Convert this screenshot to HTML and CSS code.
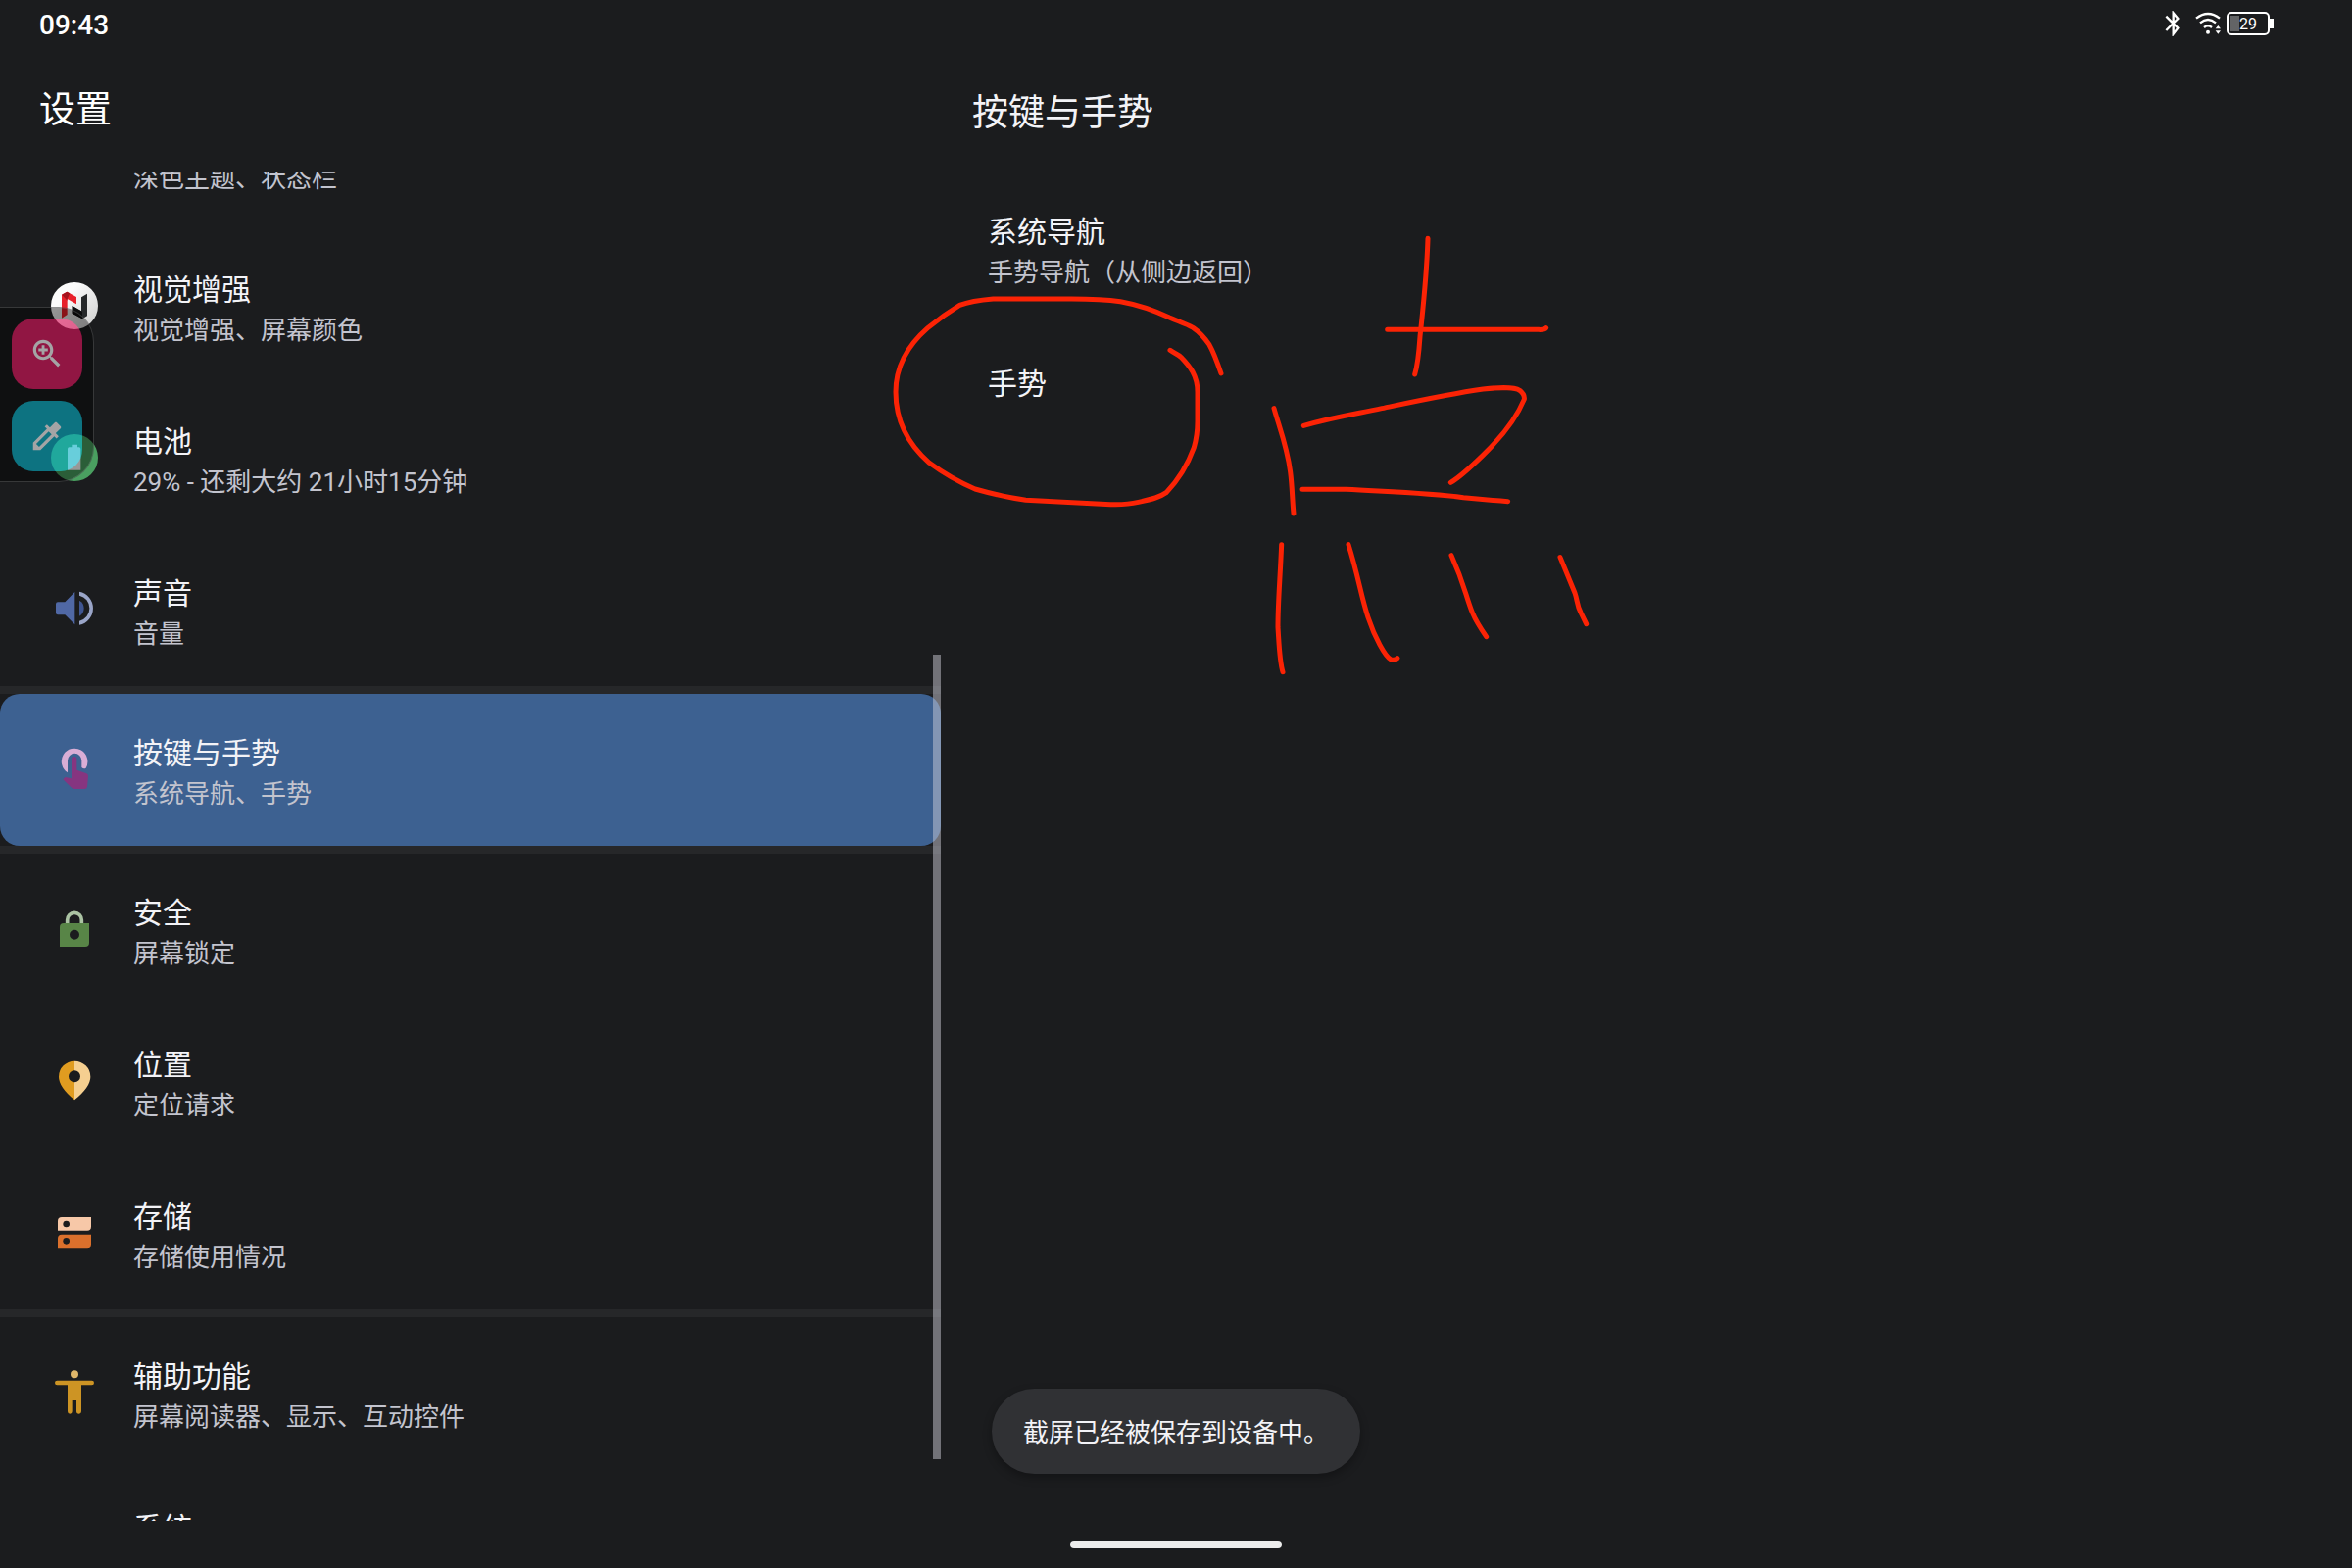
FILE: index.html
```html
<!DOCTYPE html>
<html lang="zh-CN">
  <head>
    <meta charset="UTF-8" />
    <meta name="viewport" content="width=device-width, initial-scale=1.0" />
    <title>设置</title>
    <link rel="stylesheet" href="styles.css">
  </head>
  <body>
    <header class="statusbar">
      <span class="clock">09:43</span>
      <div class="status-icons">
        <svg class="bt" viewBox="0 0 48 78">
          <path d="M4 17 L40 53 L26 71 V7 L40 24 L4 60" />
        </svg>
        <svg class="wifi" viewBox="0 0 81 70">
          <path d="M3 19 Q39 -9 75 19 M15 33 Q39 13 63 33 M27 47 Q39 37 51 47" />
          <circle cx="39" cy="61" r="6" />
          <path class="solid" d="M62 51 L70 41 L78 51 Z M62 57 L70 67 L78 57 Z" />
        </svg>
        <span class="battery"><span class="level"></span>29</span>
      </div>
    </header>

    <div class="panes">
      <section class="pane-list">
        <h1>设置</h1>
        <div class="scroll">
          <nav class="rows">
            <a class="row" href="#display">
              <span class="icon"></span>
              <span class="text"><b></b><small>深色主题、状态栏</small></span>
            </a>
            <a class="row" href="#vision">
              <svg class="icon" viewBox="0 0 144 144">
                <defs>
                  <linearGradient id="silver" x1="0" y1="0" x2="1" y2="1">
                    <stop offset="0.3" stop-color="#fbfbfb" />
                    <stop offset="1" stop-color="#cccccc" />
                  </linearGradient>
                </defs>
                <circle cx="72" cy="72" r="72" fill="url(#silver)" />
                <path fill="#e8202a" d="M33 38 L49 29 L78 45 V67 L50 51 V99 L33 110 Z" />
                <path fill="#a5121c" d="M33 38 L49 29 L58 34 L50 51 V56 Z" />
                <path fill="#26282a" d="M93 46 L111 35 V103 L96 112 L65 95 V72 L93 88 Z" />
                <path fill="#0d0e0f" d="M65 72 L96 90 V112 L65 95 Z" />
              </svg>
              <span class="text"><b>视觉增强</b><small>视觉增强、屏幕颜色</small></span>
            </a>
            <a class="row" href="#battery">
              <svg class="icon" viewBox="0 0 144 144">
                <circle cx="72" cy="72" r="72" fill="#4a9f60" />
                <path fill="#fff" d="M64 32 H81 V40 H86 Q91 40 91 45 V110 H51 V45 Q51 40 56 40 H64 Z" />
              </svg>
              <span class="text"><b>电池</b><small>29% - 还剩大约 21小时15分钟</small></span>
            </a>
            <a class="row" href="#sound">
              <svg class="icon" viewBox="0 0 144 144">
                <path fill="#5068a5" d="M21 49 H43 L73 18 V118 L43 88 H21 Q15 88 15 82 V55 Q15 49 21 49 Z" />
                <path fill="#3f5591" d="M87 44 Q101 52 101 68 Q101 84 87 92 Z" />
                <path fill="#9aa5c8" d="M87 17 A52 52 0 0 1 87 119 V107 A40 40 0 0 0 87 29 Z" />
              </svg>
              <span class="text"><b>声音</b><small>音量</small></span>
            </a>
            <hr>
            <a class="row selected" href="#gestures" aria-current="page">
              <svg class="icon" viewBox="0 0 144 144">
                <path fill="#d9aed6" d="M51 82 A40 40 0 1 1 107 68 Q101 73 94 66 V45 A21 21 0 0 0 51 45 Z" />
                <path fill="#863580" d="M63 41 Q63 33 71 33 Q79 33 79 41 V74 L109 85 Q115 88 114 94 L111 125 Q110 132 102 132 H73 Q67 132 63 128 L37 103 L44 96 L63 100 Z" />
              </svg>
              <span class="text"><b>按键与手势</b><small>系统导航、手势</small></span>
            </a>
            <hr>
            <a class="row" href="#security">
              <svg class="icon" viewBox="0 0 144 144">
                <path fill="none" stroke="#abc3a3" stroke-width="11" d="M50 54 V44 A22 22 0 0 1 94 44 V54" />
                <path fill="#588547" fill-rule="evenodd" d="M39 54 H117 V114 Q117 126 105 126 H27 V66 Q27 54 39 54 Z M72 74 A15 15 0 1 0 72 104 A15 15 0 1 0 72 74 Z" />
              </svg>
              <span class="text"><b>安全</b><small>屏幕锁定</small></span>
            </a>
            <a class="row" href="#location">
              <svg class="icon" viewBox="0 0 144 144">
                <path fill="#e09c20" d="M72 11 A48 48 0 0 0 24 59 Q24 90 72 130 V76 A18 18 0 0 1 72 40 Z" />
                <path fill="#f5cf90" d="M72 11 A49 48 0 0 1 121 59 Q121 90 72 130 V76 A18 18 0 0 0 72 40 Z" />
              </svg>
              <span class="text"><b>位置</b><small>定位请求</small></span>
            </a>
            <a class="row" href="#storage">
              <svg class="icon" viewBox="0 0 144 144">
                <path fill="#f7c8a8" d="M33 24 H123 V53 Q123 65 111 65 H21 V36 Q21 24 33 24 Z" />
                <path fill="#db702c" d="M33 77 H123 V106 Q123 118 111 118 H21 V89 Q21 77 33 77 Z" />
                <circle cx="47" cy="45" r="10" fill="#1b1c1e" />
                <circle cx="47" cy="97" r="10" fill="#1b1c1e" />
              </svg>
              <span class="text"><b>存储</b><small>存储使用情况</small></span>
            </a>
            <hr>
            <a class="row" href="#accessibility">
              <svg class="icon" viewBox="0 0 144 144">
                <circle cx="72" cy="16" r="12" fill="#deb66a" />
                <path fill="#cd9424" d="M19 35 H125 Q132 35 132 42 Q132 49 125 49 H93 V130 Q93 137 86 137 Q78 137 78 130 V96 H65 V130 Q65 137 58 137 Q51 137 51 130 V49 H19 Q12 49 12 42 Q12 35 19 35 Z" />
              </svg>
              <span class="text"><b>辅助功能</b><small>屏幕阅读器、显示、互动控件</small></span>
            </a>
            <a class="row" href="#system">
              <span class="icon"></span>
              <span class="text"><b>系统</b></span>
            </a>
          </nav>
          <div class="thumb"></div>
        </div>
      </section>

      <main class="pane-detail">
        <h2>按键与手势</h2>
        <a class="row" href="#navigation">
          <span class="text"><b>系统导航</b><small>手势导航（从侧边返回）</small></span>
        </a>
        <a class="row" href="#gesture">
          <span class="text"><b>手势</b></span>
        </a>
      </main>
    </div>

    <footer class="navbar"><div class="handle"></div></footer>

    <!-- Floating tools on the left edge -->
    <aside class="tools">
      <button class="tool magnify" aria-label="放大">
        <svg viewBox="0 0 24 24">
          <path d="M15.5 14h-.79l-.28-.27C15.41 12.59 16 11.11 16 9.5 16 5.91 13.09 3 9.5 3S3 5.91 3 9.5 5.91 16 9.5 16c1.61 0 3.09-.59 4.23-1.57l.27.28v.79l5 4.99L20.49 19l-4.99-5zm-6 0C7.01 14 5 11.99 5 9.5S7.01 5 9.5 5 14 7.01 14 9.5 11.99 14 9.5 14z" />
          <path d="M8.6 6.5h1.8v2.1h2.1v1.8h-2.1v2.1H8.6v-2.1H6.5V8.6h2.1z" />
        </svg>
      </button>
      <button class="tool picker" aria-label="取色">
        <svg viewBox="0 0 24 24">
          <path d="M20.71 5.63l-2.34-2.34c-.39-.39-1.02-.39-1.41 0l-3.12 3.12-1.93-1.91-1.41 1.41 1.42 1.42L3 16.25V21h4.75l8.92-8.92 1.42 1.42 1.41-1.41-1.92-1.92 3.12-3.12c.4-.4.4-1.03.01-1.42zM6.92 19L5 17.08l8.06-8.06 1.92 1.92L6.92 19z" />
        </svg>
      </button>
    </aside>

    <!-- Pen strokes -->
    <svg class="ink" viewBox="0 0 2340 1560">
      <g transform="translate(0 -420)">
        <path d="M1098 963 C1085 925 1075 898 1062 875 C1045 850 1030 835 1012 823 C990 811 965 803 940 792 C890 768 840 752 790 743 C740 736 690 735 640 735 H400 C355 739 325 744 298 754 C260 777 230 799 200 824 C130 885 102 950 102 1020 C102 1110 140 1180 205 1237 C250 1270 300 1298 345 1317 C395 1331 450 1344 500 1351 L760 1364 C790 1365 815 1364 845 1357 C890 1347 910 1342 930 1328 C960 1297 995 1245 1015 1190 C1022 1165 1026 1140 1026 1110 V1020 C1026 970 1003 942 975 913 C965 904 955 902 942 892" />
      </g>
      <g transform="translate(1140 0)">
        <path d="M591 130 C588 230 578 330 567 430 C564 475 562 510 551 546" />
        <path d="M467 409 H930 Q948 410 953 404" />
        <path d="M120 650 C135 705 160 765 170 845 C176 890 176 935 180 972" />
        <path d="M211 703 C300 677 370 667 450 650 C550 629 650 607 760 591 C820 584 860 587 872 595 Q888 607 886 622 C865 673 830 725 760 793 C720 832 690 860 661 877" />
        <path d="M207 898 H340 C500 907 600 910 700 923 Q770 930 836 935" />
        <path d="M143 1067 C139 1170 132 1240 132 1320 C136 1380 137 1425 147 1457" />
        <path d="M348 1067 C380 1170 385 1220 408 1290 C428 1350 460 1410 478 1419 Q490 1422 498 1415" />
        <path d="M663 1100 C705 1193 705 1220 728 1277 Q739 1304 770 1349" />
        <path d="M996 1106 L1041 1215 C1050 1240 1046 1250 1059 1275 L1076 1310" />
      </g>
    </svg>

    <div class="toast" role="status">截屏已经被保存到设备中。</div>
  </body>
</html>
```

FILE: styles.css
```css
:root {
  --bg: #1b1c1e;
  --divider: #262729;
  --accent: #3d6191;
  --title: #f3f3f7;
  --sub: #c3c4ce;
}

* {
  margin: 0;
  padding: 0;
  box-sizing: border-box;
}

body {
  position: relative;
  display: flex;
  flex-direction: column;
  height: 100vh;
  overflow: hidden;
  font-family: Roboto, "Noto Sans CJK SC", sans-serif;
  background-color: var(--bg);
  color: var(--title);
}

/* Status bar */
.statusbar {
  display: flex;
  align-items: center;
  justify-content: space-between;
  height: 48px;
  padding: 0 80px 0 40px;
}

.clock {
  padding-top: 2px;
  font-size: 28px;
  font-weight: 500;
  color: #fff;
}

.status-icons {
  display: flex;
  align-items: center;
}

.bt,
.wifi {
  fill: none;
  stroke: #fff;
  stroke-width: 7;
}

.bt {
  width: 16px;
  height: 26px;
  margin-right: 15px;
}

.wifi {
  width: 27px;
  height: 24px;
  margin-right: 5px;
}

.wifi circle,
.wifi .solid {
  fill: #fff;
  stroke: none;
}

.battery {
  position: relative;
  display: flex;
  align-items: center;
  width: 44px;
  height: 24px;
  margin-right: 4px;
  padding-left: 2px;
  border: 2px solid #fff;
  border-radius: 5px;
  font-size: 16px;
  color: #fff;
}

.battery::after {
  content: "";
  position: absolute;
  right: -6px;
  top: 5px;
  width: 4px;
  height: 10px;
  background-color: #fff;
}

.level {
  width: 9px;
  height: 16px;
  background-color: #636466;
}

/* Two panes */
.panes {
  flex: 1;
  display: flex;
  min-height: 0;
}

.pane-list {
  width: 40%;
  display: flex;
  flex-direction: column;
}

.pane-detail {
  flex: 1;
}

h1,
h2 {
  height: 128px;
  font-size: 37px;
  font-weight: 400;
  line-height: 54px;
}

h1 {
  padding: 38px 40px 0;
  color: #fff;
}

h2 {
  padding: 41px 32px 0;
}

.scroll {
  position: relative;
  flex: 1;
  overflow: hidden;
}

/* The list is scrolled part of the way down its first row */
.rows {
  margin-top: -96px;
}

.row {
  display: flex;
  height: 155px;
  padding: 39px 52px 0;
  color: inherit;
  text-decoration: none;
}

.pane-detail .row {
  padding: 39px 48px 0;
}

.icon {
  flex: none;
  width: 48px;
  height: 48px;
  margin: 14px 36px 0 0;
}

.text {
  display: flex;
  flex-direction: column;
}

.text b {
  min-height: 44px;
  font-size: 30px;
  font-weight: 400;
  line-height: 44px;
}

.text small {
  font-size: 26px;
  line-height: 38px;
  color: var(--sub);
}

.selected {
  background-color: var(--accent);
  border-radius: 20px;
}

hr {
  height: 8px;
  border: none;
  background-color: var(--divider);
}

.thumb {
  position: absolute;
  top: 492px;
  right: 0;
  width: 8px;
  height: 821px;
  background-color: rgba(210, 210, 220, 0.48);
}

/* Gesture bar */
.navbar {
  display: flex;
  align-items: center;
  justify-content: center;
  height: 48px;
}

.handle {
  width: 216px;
  height: 8px;
  border-radius: 4px;
  background-color: #ececec;
}

/* Floating tools */
.tools {
  position: absolute;
  left: 0;
  top: 313px;
  display: flex;
  flex-direction: column;
  gap: 12px;
  width: 96px;
  padding: 11px 12px 10px;
  border: 1px solid #4a4b4c;
  border-left: none;
  border-radius: 0 36px 36px 0;
  background-color: rgba(0, 0, 0, 0.67);
  opacity: 0.6;
}

.tool {
  display: flex;
  align-items: center;
  justify-content: center;
  width: 72px;
  height: 72px;
  border: none;
  border-radius: 22px;
}

.tool svg {
  width: 38px;
  height: 38px;
  fill: #fff;
}

.magnify {
  background-color: #e0135c;
}

.picker {
  background-color: #05aec4;
}

.ink {
  position: absolute;
  left: 880px;
  top: 200px;
  width: 780px;
  height: 520px;
  fill: none;
  stroke: #fb2305;
  stroke-width: 15;
  stroke-linecap: round;
  stroke-linejoin: round;
  pointer-events: none;
}

.toast {
  position: absolute;
  left: 50%;
  bottom: 96px;
  transform: translateX(-50%);
  padding: 26px 32px 22px;
  border-radius: 44px;
  background-color: #303134;
  box-shadow: 0 4px 10px rgba(0, 0, 0, 0.3);
  font-size: 26px;
  line-height: 39px;
  white-space: nowrap;
}
```
